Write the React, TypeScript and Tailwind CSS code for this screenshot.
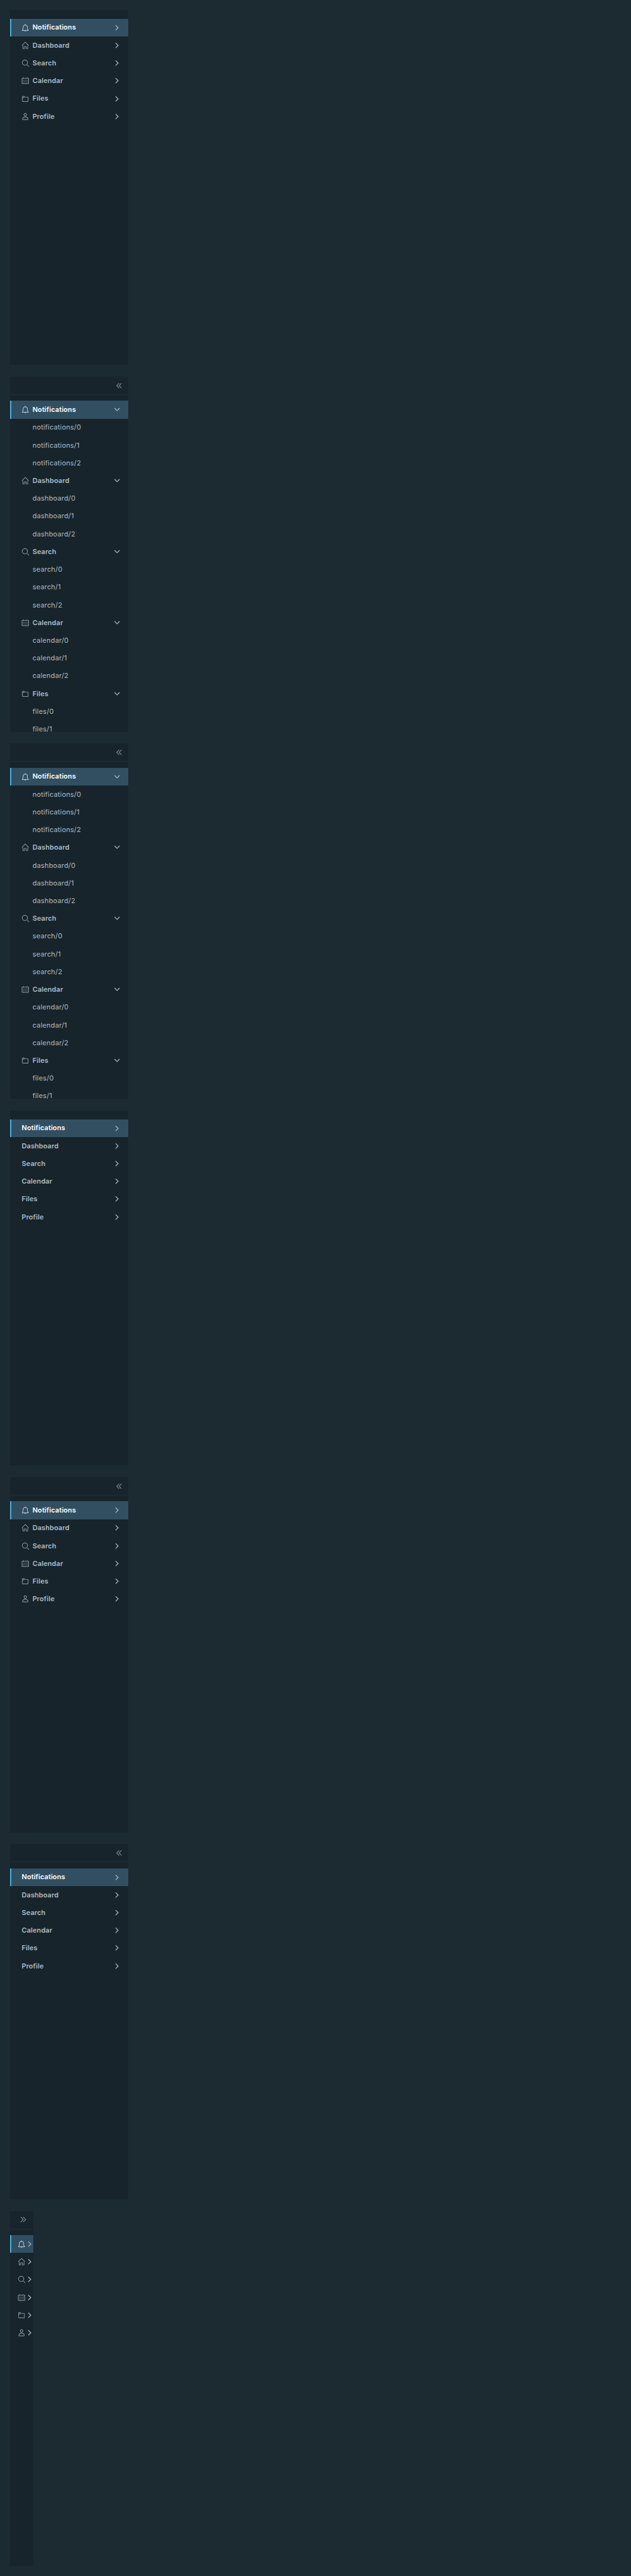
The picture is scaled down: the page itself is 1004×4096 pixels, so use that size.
import React from "react";

type Shape = "bell" | "home" | "search" | "calendar" | "folder" | "user";

const paths: Record<Shape, string[]> = {
  bell: [
    "M32.51,27.83A14.4,14.4,0,0,1,30,24.9a12.63,12.63,0,0,1-1.35-4.81V15.15A10.81,10.81,0,0,0,19.21,4.4V3.11a1.33,1.33,0,1,0-2.67,0V4.42A10.81,10.81,0,0,0,7.21,15.15v4.94A12.63,12.63,0,0,1,5.86,24.9a14.4,14.4,0,0,1-2.47,2.93,1,1,0,0,0-.34.75v1.36a1,1,0,0,0,1,1h27.8a1,1,0,0,0,1-1V28.58A1,1,0,0,0,32.51,27.83ZM5.13,28.94a16.17,16.17,0,0,0,2.44-3,14.24,14.24,0,0,0,1.65-5.85V15.15a8.74,8.74,0,1,1,17.47,0v4.94a14.24,14.24,0,0,0,1.65,5.85,16.17,16.17,0,0,0,2.44,3Z",
    "M18,34.28A2.67,2.67,0,0,0,20.58,32H15.32A2.67,2.67,0,0,0,18,34.28Z",
  ],
  home: [
    "M33.71,17.29l-15-15a1,1,0,0,0-1.41,0l-15,15a1,1,0,0,0,1.41,1.41L18,4.41,32.29,18.71a1,1,0,0,0,1.41-1.41Z",
    "M28,32h-5V22H13V32H8V18L6,20V32a2,2,0,0,0,2,2h7V24h6V34h7a2,2,0,0,0,2-2V19.76l-2-2Z",
  ],
  search: [
    "M16.33,5.05A10.95,10.95,0,1,1,5.39,16,11,11,0,0,1,16.33,5.05m0-2.05a13,13,0,1,0,13,13,13,13,0,0,0-13-13Z",
    "M35,33.29l-7.37-7.42-1.42,1.41,7.37,7.42A1,1,0,1,0,35,33.29Z",
  ],
  calendar: [
    "M32.25,6H29V8h3V30H4V8H7V6H3.75A1.78,1.78,0,0,0,2,7.81V30.19A1.78,1.78,0,0,0,3.75,32h28.5A1.78,1.78,0,0,0,34,30.19V7.81A1.78,1.78,0,0,0,32.25,6Z",
    "M8,14h2v2h-2ZM14,14h2v2h-2ZM20,14h2v2h-2ZM26,14h2v2h-2ZM8,19h2v2h-2ZM14,19h2v2h-2ZM20,19h2v2h-2ZM26,19h2v2h-2ZM8,24h2v2h-2ZM14,24h2v2h-2ZM20,24h2v2h-2ZM26,24h2v2h-2Z",
    "M10,10a1,1,0,0,0,1-1V3A1,1,0,0,0,9,3V9A1,1,0,0,0,10,10Z",
    "M26,10a1,1,0,0,0,1-1V3a1,1,0,0,0-2,0V9A1,1,0,0,0,26,10Z",
    "M13,6h10v2h-10Z",
  ],
  folder: [
    "M30,9H16.42L14.11,5.82A2,2,0,0,0,12.49,5H6A2,2,0,0,0,4,7V29a2,2,0,0,0,2,2H30a2,2,0,0,0,2-2V11A2,2,0,0,0,30,9Zm0,20H6V13h7.31V11H6V7h6.49l2.61,3.59a1,1,0,0,0,.81.41H30Z",
  ],
  user: [
    "M18,17a7,7,0,1,0-7-7A7,7,0,0,0,18,17ZM18,5a5,5,0,1,1-5,5A5,5,0,0,1,18,5Z",
    "M30.47,24.37a17.16,17.16,0,0,0-24.93,0A2,2,0,0,0,5,25.74V31a2,2,0,0,0,2,2H29a2,2,0,0,0,2-2V25.74A2,2,0,0,0,30.47,24.37ZM29,31H7V25.73a15.17,15.17,0,0,1,22,0h0Z",
  ],
};

type Item = { label: string; shape: Shape; children?: string[] };

const items: Item[] = [
  { label: "Notifications", shape: "bell" },
  { label: "Dashboard", shape: "home" },
  { label: "Search", shape: "search" },
  { label: "Calendar", shape: "calendar" },
  { label: "Files", shape: "folder" },
  { label: "Profile", shape: "user" },
];

const expandedItems: Item[] = [
  { label: "Notifications", shape: "bell", children: ["notifications/0", "notifications/1", "notifications/2"] },
  { label: "Dashboard", shape: "home", children: ["dashboard/0", "dashboard/1", "dashboard/2"] },
  { label: "Search", shape: "search", children: ["search/0", "search/1", "search/2"] },
  { label: "Calendar", shape: "calendar", children: ["calendar/0", "calendar/1", "calendar/2"] },
  { label: "Files", shape: "folder", children: ["files/0", "files/1"] },
];

function Glyph({ d, className = "" }: { d: string[]; className?: string }) {
  return (
    <svg
      viewBox="0 0 36 36"
      className={`size-[12.54px] shrink-0 fill-current stroke-current [stroke-width:0.3] ${className}`}
    >
      {d.map((p) => (
        <path key={p} d={p} />
      ))}
    </svg>
  );
}

const angle = [
  "M29.52,22.52,18,10.6,6.48,22.52a1.7,1.7,0,0,0,2.45,2.36L18,15.49l9.08,9.39a1.7,1.7,0,0,0,2.45-2.36Z",
];
const doubleAngle = [
  "M29,19.41a1,1,0,0,1-.71-.29L18,8.83,7.71,19.12a1,1,0,0,1-1.41-1.41L18,6,29.71,17.71A1,1,0,0,1,29,19.41Z",
  "M29,30.41a1,1,0,0,1-.71-.29L18,19.83,7.71,30.12a1,1,0,0,1-1.41-1.41L18,17,29.71,28.71A1,1,0,0,1,29,30.41Z",
];

type NavProps = { header?: boolean; icons?: boolean; expanded?: boolean; collapsed?: boolean };

function VerticalNav({ header, icons, expanded, collapsed }: NavProps) {
  return (
    <nav
      className={`h-[564.53px] overflow-hidden bg-[#17242b] ${collapsed ? "w-[37.64px]" : "w-[188.18px]"}`}
    >
      {header ? (
        <div
          className={`mb-[9.41px] flex h-[29.01px] items-center justify-end border-b border-[#202e36] ${
            collapsed ? "pr-[10.19px]" : "pr-[7.84px]"
          }`}
        >
          <Glyph d={doubleAngle} className={collapsed ? "rotate-90" : "-rotate-90"} />
        </div>
      ) : (
        <div className="h-[14.11px]" />
      )}
      {(expanded ? expandedItems : items).map(({ label, shape, children }, i) => (
        <div key={label}>
          <div
            className={`flex h-[28.23px] items-center border-l-2 ${
              i === 0 ? "border-[#49afd9] bg-[#324f62]" : "border-transparent"
            } ${collapsed ? "pl-[10.54px]" : "pl-[16.82px] pr-[11.76px]"}`}
          >
            {icons && (
              <Glyph
                d={paths[shape]}
                className={`${i === 0 ? "text-[#e6ecef]" : ""} ${collapsed ? "" : "mr-[4.7px]"}`}
              />
            )}
            {!collapsed && (
              <span
                className={`flex-1 font-semibold tracking-[0.09px] ${i === 0 ? "text-white" : ""}`}
              >
                {label}
              </span>
            )}
            <Glyph d={angle} className={expanded ? "rotate-180" : "rotate-90"} />
          </div>
          {children?.map((child) => (
            <div key={child} className="flex h-[28.23px] items-center pl-[36.07px] tracking-[0.19px]">
              {child}
            </div>
          ))}
        </div>
      ))}
    </nav>
  );
}

export default function App() {
  return (
    <main className="flex h-[4096px] flex-col gap-[18.82px] overflow-hidden bg-[#1c2a32] p-[15.68px] font-['Inter',sans-serif] text-[10.98px] leading-[18.82px] text-[#adbbc4]">
      <VerticalNav icons />
      <VerticalNav header icons expanded />
      <VerticalNav header icons expanded />
      <VerticalNav />
      <VerticalNav header icons />
      <VerticalNav header />
      <VerticalNav header icons collapsed />
    </main>
  );
}
